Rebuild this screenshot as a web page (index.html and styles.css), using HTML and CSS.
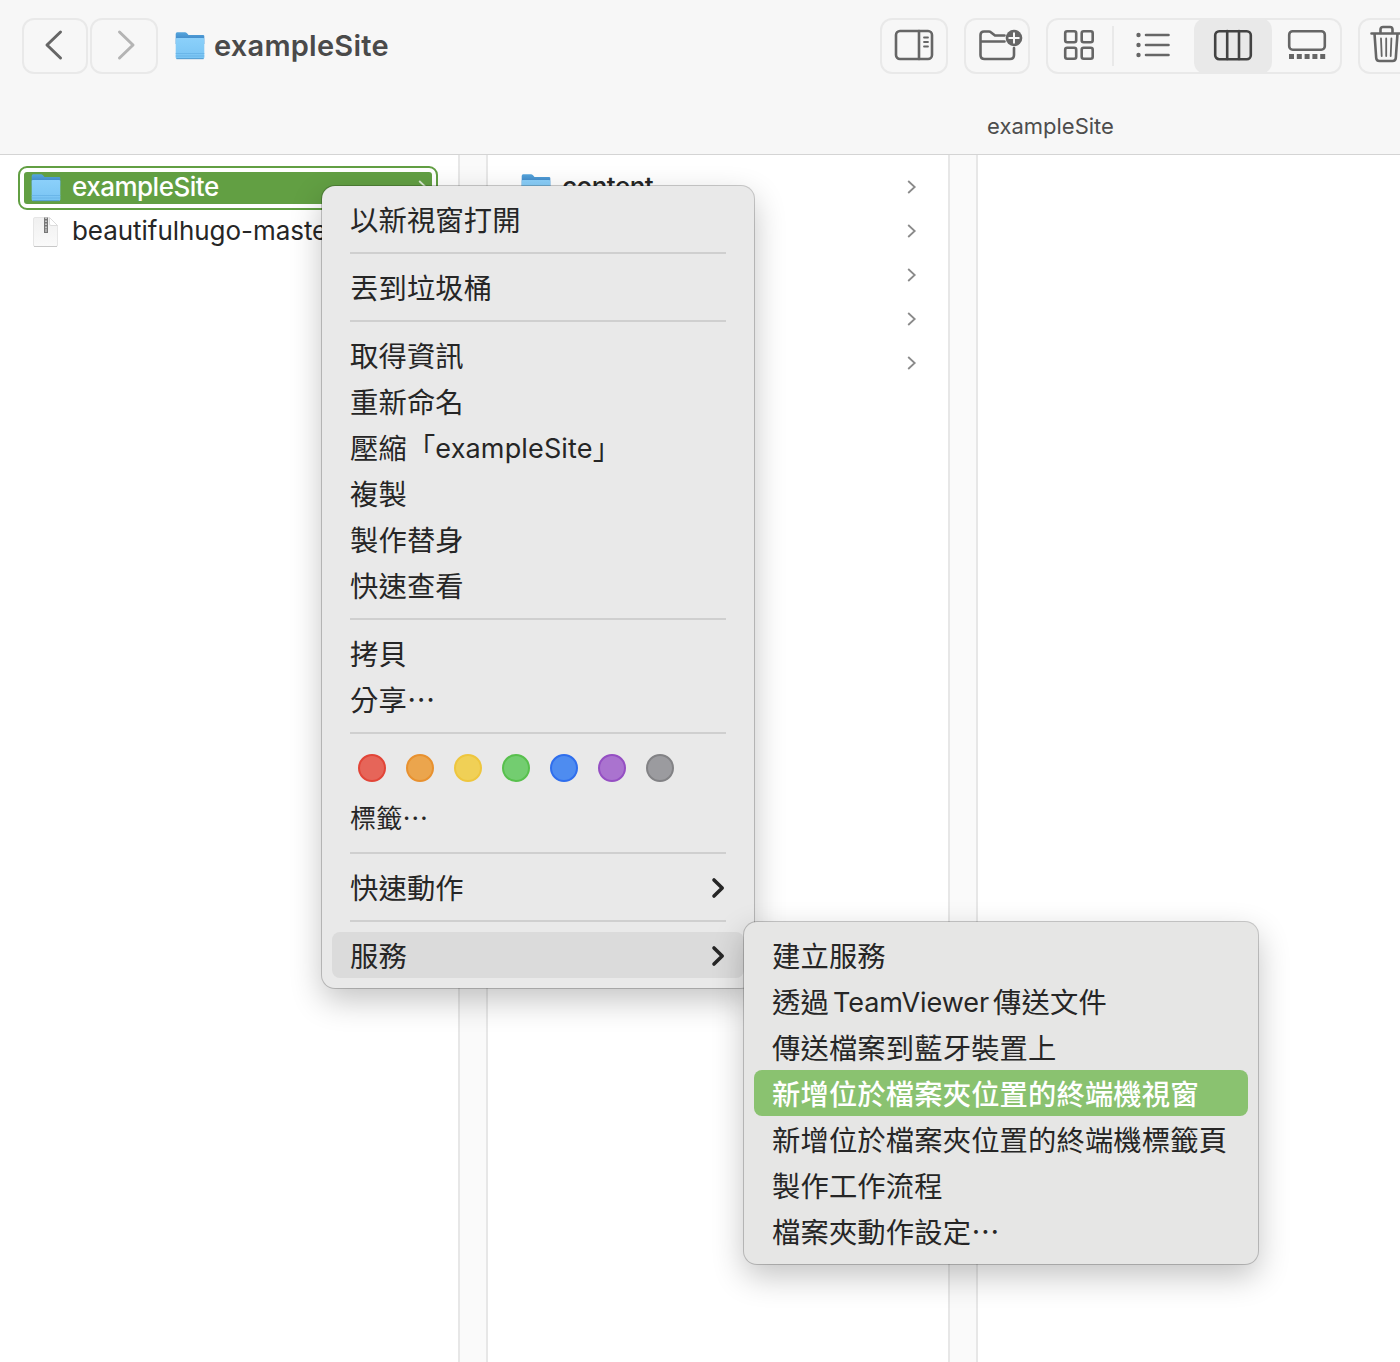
FILE: index.html
```html
<!DOCTYPE html>
<html lang="zh-Hant">
<head>
<meta charset="utf-8">
<title>exampleSite</title>
<link rel="stylesheet" href="styles.css">
</head>
<body>
<svg class="defs" width="0" height="0" aria-hidden="true">
  <defs>
    <linearGradient id="front" x1="0" y1="0" x2="0" y2="1"><stop offset="0" stop-color="#8bd0fa"/><stop offset="1" stop-color="#79c4f3"/></linearGradient>
    <linearGradient id="back" x1="0" y1="0" x2="0" y2="1"><stop offset="0" stop-color="#55a5dc"/><stop offset="1" stop-color="#3478bd"/></linearGradient>
    <linearGradient id="paper" x1="0" y1="0" x2="0" y2="1"><stop offset="0" stop-color="#f0f0f0"/><stop offset="1" stop-color="#fafafa"/></linearGradient>
    <symbol id="folder" viewBox="0 0 30 28">
      <path d="M.7 2Q.7 .3 2.200 .3H10Q11 .3 12 1.300L13.500 3H28Q29.300 3 29.300 4V12H.7Z" fill="url(#back)"/>
      <path d="M.7 6.800Q.7 6 2 6H28Q29.300 6 29.300 7V25.500Q29.300 27 27.800 27H2.200Q.7 27 .7 25.500Z" fill="url(#front)"/>
      <path d="M.7 21.500H29.300M.7 24H29.300" stroke="#64b1e6" stroke-width=".8"/>
      <path d="M1.500 26.700H28.500" stroke="#4d94c8" stroke-width=".9"/>
    </symbol>
    <symbol id="chev" viewBox="0 0 10 14"><path d="M1.200 1L7.700 7L1.200 13" fill="none" stroke="currentColor" stroke-width="1.800"/></symbol>
    <symbol id="arrow" viewBox="0 0 16 22"><path d="M4 3L12.200 11L4 19" fill="none" stroke="currentColor" stroke-width="3.600" stroke-linecap="round" stroke-linejoin="round"/></symbol>
  </defs>
</svg>
<div class="window">
  <header class="header">
    <div class="toolbar">
      <div class="nav">
        <button class="btn back"><svg width="20" height="32" viewBox="0 0 20 32"><path d="M16.500 3L3 16L16.500 29" class="stroke"/></svg></button>
        <button class="btn forward"><svg width="20" height="32" viewBox="0 0 20 32"><path d="M3.500 3L17 16L3.500 29" class="stroke"/></svg></button>
      </div>
      <div class="title"><svg class="folder" width="30" height="28"><use href="#folder"/></svg><h1>exampleSite</h1></div>
      <div class="tools">
        <button class="btn preview"><svg width="40" height="32" viewBox="0 0 40 32"><rect x="2" y="2" width="36" height="28" rx="4" class="stroke"/><path d="M25 2V30" class="stroke"/><path d="M30 8.500H34M30 13H34M30 17.500H34" class="stroke thin"/></svg></button>
        <button class="btn newfolder"><svg width="48" height="36" viewBox="0 0 48 36"><path d="M28.500 8.500H19L14.500 5Q14 4.500 13 4.500H8Q4.500 4.500 4.500 8V28Q4.500 32 8.500 32H34Q38 32 38 28V21M4.500 14.500H28.500" class="stroke"/><circle cx="38" cy="11" r="8.300" fill="#666"/><path d="M32.500 11H43.500M38 5.500V16.500" stroke="#f7f7f7" stroke-width="2"/></svg></button>
        <div class="views">
          <button class="view grid"><svg width="32" height="32" viewBox="0 0 32 32"><g class="stroke"><rect x="2.200" y="2.200" width="11" height="11" rx="2"/><rect x="18.700" y="2.200" width="11" height="11" rx="2"/><rect x="2.200" y="18.700" width="11" height="11" rx="2"/><rect x="18.700" y="18.700" width="11" height="11" rx="2"/></g></svg></button>
          <button class="view list"><svg width="36" height="28" viewBox="0 0 36 28"><g fill="#666"><circle cx="3.500" cy="4" r="2.200"/><circle cx="3.500" cy="14" r="2.200"/><circle cx="3.500" cy="24" r="2.200"/></g><path d="M11 4H33.500M11 14H33.500M11 24H33.500" class="stroke"/></svg></button>
          <button class="view cols"><svg width="40" height="32" viewBox="0 0 40 32"><rect x="2.200" y="2.200" width="35.600" height="28" rx="4" class="stroke"/><path d="M14.200 2V30M26 2V30" class="stroke"/></svg></button>
          <button class="view gallery"><svg width="40" height="32" viewBox="0 0 40 32"><rect x="2.200" y="2.200" width="35.600" height="18.500" rx="3.500" class="stroke"/><path d="M2 27.500H39" stroke="#666" stroke-width="5" stroke-dasharray="5 2.800"/></svg></button>
        </div>
        <button class="btn trash"><svg width="32" height="40" viewBox="0 0 32 40"><path d="M1.500 9.500H30.500M4.500 9.500L6.200 34Q6.400 37 9.500 37H22.500Q25.600 37 25.800 34L27.500 9.500M10.500 9V5.500Q10.500 3 13 3H20Q22.500 3 22.500 5.500V9" class="stroke"/><path d="M11 14.500L11.700 32M16.200 14.500V32M21.400 14.500L20.700 32" class="stroke thin"/></svg></button>
      </div>
    </div>
    <div class="pathlabel"><span>exampleSite</span></div>
  </header>
  <main class="columns">
    <section class="column">
      <div class="row selected"><div class="fill"><svg class="folder" width="30" height="28"><use href="#folder"/></svg><span class="name">exampleSite</span><svg class="chevron" width="10" height="14"><use href="#chev"/></svg></div></div>
      <div class="row"><svg class="zip" width="30" height="32" viewBox="0 0 30 32"><path d="M4 1.500H18.500L26.500 9.500V29Q26.500 30.500 25 30.500H4Q2.500 30.500 2.500 29V3Q2.500 1.500 4 1.500Z" fill="url(#paper)" stroke="#e6e6e6"/><path d="M18.500 1.500V8Q18.500 9.500 20 9.500H26.500Z" fill="#fff" stroke="#dcdcdc"/><path d="M3 30.500H26" stroke="#c8c8c8"/><path d="M13 1.500V17H17V1.500Z" fill="#777"/><path d="M15 1.500V12" stroke="#ddd" stroke-width="1.500" stroke-dasharray="1.500 1.500"/><path d="M15 12.500V16" stroke="#bbb" stroke-width="1.500"/></svg><span class="name long">beautifulhugo-master</span></div>
    </section>
    <div class="gutter"></div>
    <section class="column second">
      <div class="row"><svg class="folder" width="30" height="28"><use href="#folder"/></svg><span class="name">content</span><svg class="chevron" width="10" height="14"><use href="#chev"/></svg></div>
      <div class="row"><svg class="chevron" width="10" height="14"><use href="#chev"/></svg></div>
      <div class="row"><svg class="chevron" width="10" height="14"><use href="#chev"/></svg></div>
      <div class="row"><svg class="chevron" width="10" height="14"><use href="#chev"/></svg></div>
      <div class="row"><svg class="chevron" width="10" height="14"><use href="#chev"/></svg></div>
    </section>
    <div class="gutter"></div>
    <section class="column last"></section>
  </main>

  <div class="menu context">
    <div class="item">以新視窗打開</div>
    <div class="sep"></div>
    <div class="item">丟到垃圾桶</div>
    <div class="sep"></div>
    <div class="item">取得資訊</div>
    <div class="item">重新命名</div>
    <div class="item">壓縮「<span class="latin">exampleSite</span>」</div>
    <div class="item">複製</div>
    <div class="item">製作替身</div>
    <div class="item">快速查看</div>
    <div class="sep"></div>
    <div class="item">拷貝</div>
    <div class="item">分享⋯</div>
    <div class="sep"></div>
    <div class="tags"><i class="red"></i><i class="orange"></i><i class="yellow"></i><i class="green"></i><i class="blue"></i><i class="purple"></i><i class="gray"></i></div>
    <div class="item small">標籤⋯</div>
    <div class="sep"></div>
    <div class="item">快速動作<svg class="arrow" width="16" height="22"><use href="#arrow"/></svg></div>
    <div class="sep"></div>
    <div class="item open">服務<svg class="arrow" width="16" height="22"><use href="#arrow"/></svg></div>
  </div>

  <div class="menu services">
    <div class="item">建立服務</div>
    <div class="item">透過<span class="latin team">TeamViewer</span>傳送文件</div>
    <div class="item">傳送檔案到藍牙裝置上</div>
    <div class="item active">新增位於檔案夾位置的終端機視窗</div>
    <div class="item">新增位於檔案夾位置的終端機標籤頁</div>
    <div class="item">製作工作流程</div>
    <div class="item">檔案夾動作設定⋯</div>
  </div>
</div>
</body>
</html>
```
FILE: styles.css
```css
* { box-sizing: border-box; }
body { margin: 0; background: #fff; font-family: Inter, "Noto Sans CJK TC", sans-serif; color: #262626; }
svg { display: block; flex: none; }
.defs { position: absolute; }
.window { position: relative; width: 1400px; height: 1362px; overflow: hidden; display: flex; flex-direction: column; }

.header { height: 155px; flex: none; background: #f7f7f7; border-bottom: 1px solid #d4d4d4; }
.toolbar { display: flex; height: 92px; padding: 18px 0 18px 22px; }
.stroke { fill: none; stroke: currentColor; stroke-width: 2.6; stroke-linecap: round; stroke-linejoin: round; }
.thin { stroke-width: 1.8; }
.btn, .view { appearance: none; padding: 0; margin: 0; background: none; color: #666; display: flex; align-items: center; justify-content: center; flex: none; }
.btn { height: 56px; border: 2px solid #e9e9e9; border-radius: 12px; padding-bottom: 3px; }
.nav { display: flex; gap: 2px; flex: none; }
.nav .stroke { stroke-width: 3; }
.back { width: 66px; padding-right: 3px; }
.forward { width: 68px; color: #b4b4b4; padding-left: 4px; }
.title { display: flex; align-items: center; margin-left: 17px; height: 56px; width: 600px; flex: none; }
.title .folder { margin-top: -1px; }
.title h1 { margin: -1px 0 0 9px; font-size: 29px; line-height: 36px; font-weight: 600; letter-spacing: .25px; color: #4a4a4a; }
.tools { display: flex; flex: none; gap: 16px; margin-left: 105px; }
.preview { width: 68px; }
.newfolder { width: 66px; padding-left: 5px; }
.views { display: flex; flex: none; width: 296px; height: 56px; border-radius: 12px; box-shadow: inset 0 0 0 2px #e9e9e9; }
.view { border: 0; height: 56px; padding-bottom: 3px; }
.grid { width: 66px; }
.list { width: 82px; position: relative; }
.list::before { content: ""; position: absolute; left: 0; top: 8px; width: 2px; height: 40px; background: #e9e9e9; }
.cols { width: 78px; background: #e9e9e9; border-radius: 12px; color: #434343; }
.gallery { width: 70px; }
.trash { width: 68px; justify-content: flex-start; padding-left: 10px; padding-bottom: 5px; }
.pathlabel { margin-left: 701px; height: 62px; padding-top: 20px; text-align: center; font-size: 22px; line-height: 28px; color: #4d4d4d; }

.columns { flex: 1; display: flex; }
.column { width: 458px; padding: 11px 20px 0 18px; overflow: hidden; }
.second { width: 460px; padding: 11px 31px 0 33px; }
.last { flex: 1; }
.gutter { width: 30px; flex: none; background: #fafafa; border: solid #e7e7e7; border-width: 0 2px; }
.row { height: 44px; display: flex; align-items: center; padding-left: 13px; font-size: 26px; font-weight: 500; }
.second .row { padding-left: 0; }
.row .folder { margin-top: -1px; }
.row .name { margin: -2px 0 0 11px; line-height: 34px; white-space: nowrap; letter-spacing: -.5px; }
.row .name.long { font-weight: 400; letter-spacing: -.05px; }
.selected { padding: 4px; border: 2px solid #629f43; border-radius: 9px; color: #fff; }
.fill { flex: 1; height: 32px; border-radius: 3px; background: #629f43; display: flex; align-items: center; padding: 0 7px; }
.chevron { margin: -2px 0 0 auto; color: #8a8a8a; }
.selected .chevron { color: #d9e9d0; margin-right: -3px; }

.menu { position: absolute; padding: 10px; border-radius: 13px; background: #e9e9e9; box-shadow: 0 0 0 1px rgba(0,0,0,.2), 0 12px 32px rgba(0,0,0,.24); font-size: 28.3px; letter-spacing: .15px; }
.context { left: 322px; top: 186px; width: 432px; height: 802px; }
.services { left: 744px; top: 922px; width: 514px; height: 342px; background: #e6e6e5; }
.item { height: 46px; padding: 0 18px; border-radius: 8px; display: flex; align-items: center; line-height: 46px; white-space: nowrap; font-family: "Noto Sans CJK TC", sans-serif; }
.latin { font-family: Inter, sans-serif; font-size: 27px; padding-top: 3px; }
.team { margin: 0 4px; letter-spacing: -.05px; }
.sep { height: 22px; margin: 0 18px; padding-top: 10px; }
.sep::before { content: ""; display: block; height: 2px; background: #cfcfcf; }
.small { height: 52px; font-size: 26px; padding-top: 2px; }
.arrow { margin: 2px 0 0 auto; }
.open { background: #dbdbdb; }
.active { background: #8ac270; color: #fff; font-weight: 500; }
.tags { display: flex; gap: 20px; height: 46px; align-items: center; padding: 2px 26px 0; }
.tags i { width: 28px; height: 28px; border-radius: 50%; border: 2px solid; }
.tags .red { background: #e66559; border-color: #e24538; }
.tags .orange { background: #eba54d; border-color: #e8912f; }
.tags .yellow { background: #f0d056; border-color: #eec63e; }
.tags .green { background: #73cd70; border-color: #58c04d; }
.tags .blue { background: #4e8cf0; border-color: #2f6eed; }
.tags .purple { background: #aa73cf; border-color: #954fc3; }
.tags .gray { background: #9b9b9f; border-color: #828285; }
```
